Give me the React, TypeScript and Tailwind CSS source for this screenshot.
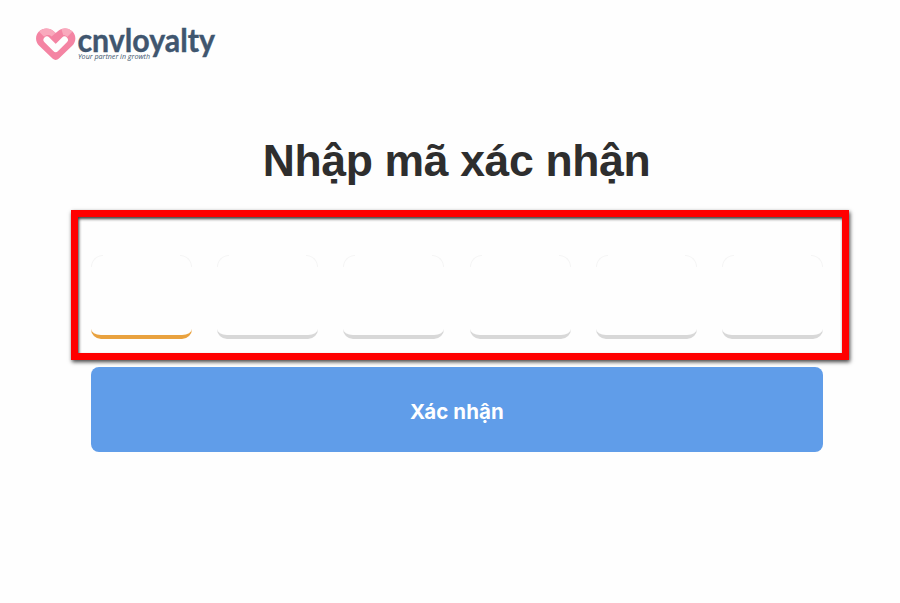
const borders = [
  'border-[#e9a23f]',
  'border-[#d8d8d8]',
  'border-[#d8d8d8]',
  'border-[#d8d8d8]',
  'border-[#d8d8d8]',
  'border-[#d8d8d8]',
];

function Logo() {
  return (
    <svg width="184" height="44" viewBox="0 0 184 44" role="img" aria-label="cnvloyalty">
      <path
        d="M16.5 34.6 L3.2 21.8 C-0.9 17.6 -1 11.5 2.9 7.6 C7 3.5 13 3.5 17 6.8 L19.7 9 L22.4 6.8 C26.4 3.5 32.4 3.5 36.5 7.6 C40.4 11.5 40.3 17.6 36.2 21.8 L22.9 34.6 C21 36.5 18.4 36.5 16.5 34.6 Z"
        fill="#f484a3"
      />
      <path d="M2.9 7.6 C7 3.5 13 3.5 17 6.8 L19.7 9 L15.6 12.6 C13 10.4 10.2 10.7 8.1 12.8 Z" fill="#f9a9bd" />
      <path d="M25.4 5 C29.2 3.4 33.2 4.2 36.5 7.6 L31.2 12.9 C30 11.6 28.6 11 27.2 11 Z" fill="#f9a9bd" />
      <path
        d="M10.9 15.9 L19.7 24.6 L28.5 15.9"
        fill="none"
        stroke="#fefefe"
        strokeWidth="6.8"
        strokeLinecap="round"
        strokeLinejoin="round"
      />
      <text
        x="41.5"
        y="27.5"
        textLength="137.5"
        lengthAdjust="spacingAndGlyphs"
        className="fill-[#40566f] stroke-[#40566f] stroke-[0.4px] font-['Lato',sans-serif] text-[31.5px] font-bold"
      >
        cnvloyalty
      </text>
      <text
        x="42"
        y="35"
        textLength="72"
        lengthAdjust="spacingAndGlyphs"
        className="fill-[#40566f] font-['Open_Sans',sans-serif] text-[7px] font-medium italic"
      >
        Your partner in growth
      </text>
    </svg>
  );
}

export default function App() {
  return (
    <main className="h-[603px] w-[900px] overflow-hidden bg-[#fefefe] pt-6">
      <header className="ml-9 h-11">
        <Logo />
      </header>
      <h1 className="mt-[66px] ml-[13px] h-[53px] text-center font-['Liberation_Sans',sans-serif] text-[44.5px] leading-[53px] font-bold tracking-[-0.35px] whitespace-nowrap text-[#2e2e2e]">
        Nhập mã xác nhận
      </h1>
      <section className="mt-[23px] ml-[71px] flex h-[150px] w-[778px] justify-between border-7 border-[#ff0000] pt-[38px] pr-[19px] pl-[13px] shadow-[1px_2px_4px_rgba(0,0,0,0.75),inset_1px_2px_3px_rgba(0,0,0,0.75)]">
        {borders.map((color, i) => (
          <label
            key={i}
            className="relative h-[84px] w-[101px] before:absolute before:top-0 before:left-0 before:size-3 before:rounded-tl-[12px] before:border-t before:border-l before:border-[#f5f5f5] after:absolute after:top-0 after:right-0 after:size-3 after:rounded-tr-[12px] after:border-t after:border-r after:border-[#f5f5f5]"
          >
            <input
              aria-label={`${i + 1}`}
              maxLength={1}
              className={`block h-[84px] w-[101px] rounded-[10px] border-b-4 bg-[#fefefe] outline-none ${color}`}
            />
          </label>
        ))}
      </section>
      <button className="mt-[7px] ml-[91px] flex h-[85px] w-[732px] items-center justify-center rounded-lg bg-[#609de9] pt-1.5 font-['Inter',sans-serif] text-[20.5px] font-bold tracking-[0.1px] text-white">
        Xác nhận
      </button>
    </main>
  );
}
